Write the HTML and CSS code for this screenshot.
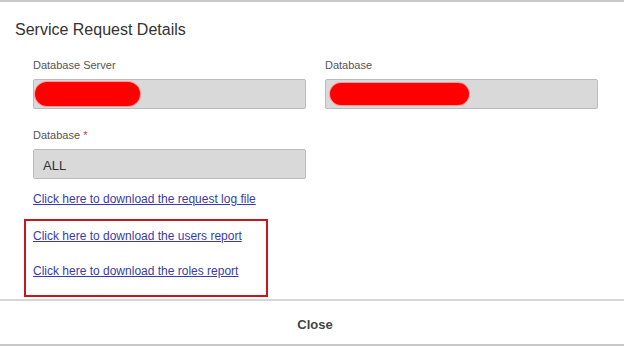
FILE: index.html
```html
<!DOCTYPE html>
<html>
<head>
	<title>Service Request Details</title>
	<link rel="stylesheet" href="styles.css">
</head>
<body>
	<div class="dialog">
		<h2 class="title">Service Request Details</h2>
		<div class="content">
			<div class="row">
				<div class="field">
					<label>Database Server</label>
					<div class="input"><span class="redact redact-short"></span></div>
				</div>
				<div class="field">
					<label>Database</label>
					<div class="input"><span class="redact redact-long"></span></div>
				</div>
			</div>
			<div class="row row-last">
				<div class="field">
					<label>Database <span class="req">*</span></label>
					<div class="input">ALL</div>
				</div>
			</div>
			<a href="#" class="link">Click here to download the request log file</a>
			<div class="highlight">
				<a href="#" class="link">Click here to download the users report</a>
				<a href="#" class="link">Click here to download the roles report</a>
			</div>
		</div>
		<div class="footer">
			<button class="close">Close</button>
		</div>
	</div>
</body>
</html>
```

FILE: styles.css
```css
body {
	margin: 0;
	font-family: "Liberation Sans", Arial, sans-serif;
	background: #fff;
}
.dialog {
	border-top: 2px solid #c8c8c8;
	border-bottom: 2px solid #c8c8c8;
	height: 342px;
}
.title {
	margin: 0;
	padding: 18px 0 0 15px;
	font-size: 16px;
	font-weight: normal;
	color: #333;
	line-height: 20px;
}
.content {
	padding: 18px 0 0 33px;
	height: 259px;
	box-sizing: border-box;
}
.row {
	display: flex;
	gap: 19px;
	margin-bottom: 19px;
}
.row-last {
	margin-bottom: 14px;
}
.field {
	width: 273px;
}
.field label {
	display: block;
	font-size: 11px;
	color: #555;
	line-height: 14px;
	margin-bottom: 7px;
}
.req {
	color: #d33;
}
.input {
	height: 30px;
	box-sizing: border-box;
	background: #d9d9d9;
	border: 1px solid #bbb;
	border-radius: 2px;
	padding: 2px 0 0 9px;
	display: flex;
	align-items: center;
	font-size: 13px;
	color: #333;
}
.redact {
	display: block;
	height: 24px;
	background: #f00;
	border-radius: 12px;
	box-shadow: 0 0 0 1px #f99;
	margin-left: -8px;
	margin-top: -2px;
}
.redact-short {
	width: 105px;
}
.redact-long {
	width: 139px;
	height: 22px;
	margin-left: -5px;
}
.link {
	display: block;
	font-size: 12px;
	color: #3b3ba8;
	line-height: 14px;
	margin-top: -1px;
}
.highlight {
	margin: 13px 0 0 -9px;
	width: 244px;
	height: 78px;
	box-sizing: border-box;
	border: 2px solid #c8161d;
	padding: 8px 0 0 7px;
}
.highlight .link {
	margin: 0 0 21px;
}
.footer {
	border-top: 2px solid #d6d6d6;
	height: 43px;
	box-sizing: border-box;
	padding-top: 5px;
	display: flex;
	justify-content: center;
	align-items: center;
}
.close {
	background: none;
	border: none;
	font-family: inherit;
	font-size: 13px;
	font-weight: bold;
	color: #444;
	padding: 0 0 0 6px;
}
```
